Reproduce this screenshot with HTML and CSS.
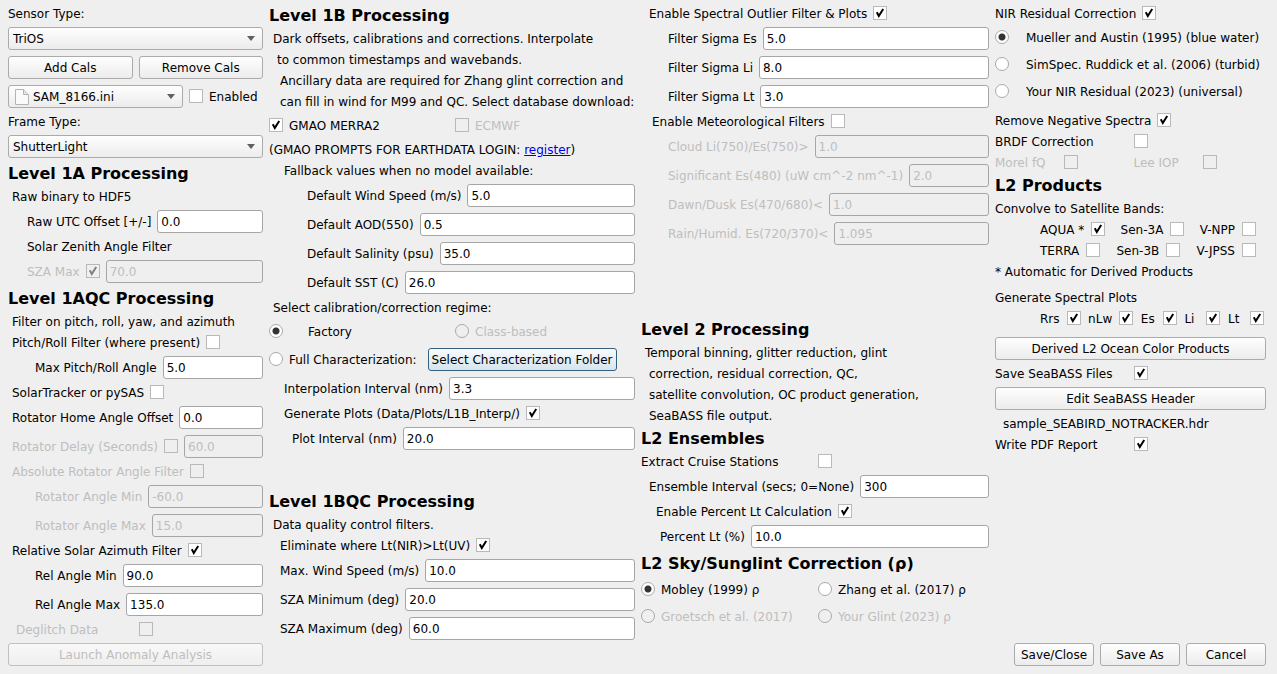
FILE: index.html
```html
<!DOCTYPE html>
<html lang="en">
<head>
<meta charset="utf-8">
<title>Configuration</title>
<link rel="stylesheet" href="styles.css">
</head>
<body>
<form class="window">
  <section class="column">
    <label class="text" for="sensor">Sensor Type:</label>
    <select class="combo" id="sensor"><option>TriOS</option></select>
    <div class="halves">
      <button class="button" type="button">Add Cals</button>
      <button class="button" type="button">Remove Cals</button>
    </div>
    <div class="row">
      <select class="combo combo-file grow" aria-label="Calibration file"><option>SAM_8166.ini</option></select>
      <span class="option enabled-option"><input class="check" type="checkbox" id="enabled"><label for="enabled">Enabled</label></span>
    </div>
    <label class="text" for="frame">Frame Type:</label>
    <select class="combo" id="frame"><option>ShutterLight</option></select>

    <h2 class="heading">Level 1A Processing</h2>
    <p class="text indent-1">Raw binary to HDF5</p>
    <div class="row indent-5"><label for="utc">Raw UTC Offset [+/-]</label><input class="field" id="utc" value="0.0"></div>
    <p class="text indent-5">Solar Zenith Angle Filter</p>
    <div class="row indent-5 off"><label for="szaon">SZA Max</label><input class="check" type="checkbox" id="szaon" checked disabled><input class="field" aria-label="SZA Max" value="70.0" disabled></div>

    <h2 class="heading">Level 1AQC Processing</h2>
    <p class="text indent-1">Filter on pitch, roll, yaw, and azimuth</p>
    <div class="row indent-1"><label for="pitch">Pitch/Roll Filter (where present)</label><input class="check" type="checkbox" id="pitch"></div>
    <div class="row indent-7"><label for="maxpitch">Max Pitch/Roll Angle</label><input class="field" id="maxpitch" value="5.0"></div>
    <div class="row indent-1"><label for="tracker">SolarTracker or pySAS</label><input class="check" type="checkbox" id="tracker"></div>
    <div class="row indent-1"><label for="home">Rotator Home Angle Offset</label><input class="field" id="home" value="0.0"></div>
    <div class="row indent-1 off"><label for="delay">Rotator Delay (Seconds)</label><input class="check" type="checkbox" id="delay" disabled><input class="field" aria-label="Rotator Delay" value="60.0" disabled></div>
    <div class="row indent-1 off"><label for="absrot">Absolute Rotator Angle Filter</label><input class="check" type="checkbox" id="absrot" disabled></div>
    <div class="row indent-7 off"><label for="rotmin">Rotator Angle Min</label><input class="field" id="rotmin" value="-60.0" disabled></div>
    <div class="row indent-7 off"><label for="rotmax">Rotator Angle Max</label><input class="field" id="rotmax" value="15.0" disabled></div>
    <div class="row indent-1"><label for="relsolar">Relative Solar Azimuth Filter</label><input class="check" type="checkbox" id="relsolar" checked></div>
    <div class="row indent-7"><label for="relmin">Rel Angle Min</label><input class="field" id="relmin" value="90.0"></div>
    <div class="row indent-7"><label for="relmax">Rel Angle Max</label><input class="field" id="relmax" value="135.0"></div>
    <div class="halves off"><label class="indent-2" for="deglitch">Deglitch Data</label><input class="check" type="checkbox" id="deglitch" disabled></div>
    <button class="button" type="button" disabled>Launch Anomaly Analysis</button>
  </section>

  <section class="column">
    <h2 class="heading">Level 1B Processing</h2>
    <p class="text indent-1">Dark offsets, calibrations and corrections. Interpolate</p>
    <p class="text indent-2">to common timestamps and wavebands.</p>
    <p class="text indent-3">Ancillary data are required for Zhang glint correction and</p>
    <p class="text indent-3">can fill in wind for M99 and QC. Select database download:</p>
    <div class="halves choice">
      <span class="option"><input class="check" type="checkbox" id="gmao" checked><label for="gmao">GMAO MERRA2</label></span>
      <span class="option off"><input class="check" type="checkbox" id="ecmwf" disabled><label for="ecmwf">ECMWF</label></span>
    </div>
    <p class="text">(GMAO PROMPTS FOR EARTHDATA LOGIN: <a class="link" href="#register">register</a>)</p>
    <p class="text indent-4">Fallback values when no model available:</p>
    <div class="row indent-10"><label for="wind">Default Wind Speed (m/s)</label><input class="field" id="wind" value="5.0"></div>
    <div class="row indent-10"><label for="aod">Default AOD(550)</label><input class="field" id="aod" value="0.5"></div>
    <div class="row indent-10"><label for="salt">Default Salinity (psu)</label><input class="field" id="salt" value="35.0"></div>
    <div class="row indent-10"><label for="sst">Default SST (C)</label><input class="field" id="sst" value="26.0"></div>
    <p class="text indent-1">Select calibration/correction regime:</p>
    <div class="halves choice">
      <span class="option"><input class="radio" type="radio" name="regime" id="factory" checked><label class="indent-5" for="factory">Factory</label></span>
      <span class="option off"><input class="radio" type="radio" name="regime" id="class" disabled><label for="class">Class-based</label></span>
    </div>
    <div class="row row-wide">
      <span class="option"><input class="radio" type="radio" name="regime" id="full"><label for="full">Full Characterization:</label></span>
      <button class="button button-focus" type="button">Select Characterization Folder</button>
    </div>
    <div class="row indent-4"><label for="interp">Interpolation Interval (nm)</label><input class="field" id="interp" value="3.3"></div>
    <div class="row indent-4"><label for="plots">Generate Plots (Data/Plots/L1B_Interp/)</label><input class="check" type="checkbox" id="plots" checked></div>
    <div class="row indent-6"><label for="plotint">Plot Interval (nm)</label><input class="field" id="plotint" value="20.0"></div>

    <h2 class="heading heading-qc">Level 1BQC Processing</h2>
    <p class="text indent-1">Data quality control filters.</p>
    <div class="row indent-3"><label for="elim">Eliminate where Lt(NIR)&gt;Lt(UV)</label><input class="check" type="checkbox" id="elim" checked></div>
    <div class="row indent-3"><label for="maxwind">Max. Wind Speed (m/s)</label><input class="field" id="maxwind" value="10.0"></div>
    <div class="row indent-3"><label for="szamin">SZA Minimum (deg)</label><input class="field" id="szamin" value="20.0"></div>
    <div class="row indent-3"><label for="szamax">SZA Maximum (deg)</label><input class="field" id="szamax" value="60.0"></div>
  </section>

  <section class="column">
    <div class="row indent-2"><label for="outlier">Enable Spectral Outlier Filter &amp; Plots</label><input class="check" type="checkbox" id="outlier" checked></div>
    <div class="row indent-7"><label for="es">Filter Sigma Es</label><input class="field" id="es" value="5.0"></div>
    <div class="row indent-7"><label for="li">Filter Sigma Li</label><input class="field" id="li" value="8.0"></div>
    <div class="row indent-7"><label for="lt">Filter Sigma Lt</label><input class="field" id="lt" value="3.0"></div>
    <div class="row indent-3"><label for="met">Enable Meteorological Filters</label><input class="check" type="checkbox" id="met"></div>
    <div class="row indent-7 off"><label for="cloud">Cloud Li(750)/Es(750)&gt;</label><input class="field" id="cloud" value="1.0" disabled></div>
    <div class="row indent-7 off"><label for="signif">Significant Es(480) (uW cm^-2 nm^-1)</label><input class="field" id="signif" value="2.0" disabled></div>
    <div class="row indent-7 off"><label for="dawn">Dawn/Dusk Es(470/680)&lt;</label><input class="field" id="dawn" value="1.0" disabled></div>
    <div class="row indent-7 off"><label for="rain">Rain/Humid. Es(720/370)&lt;</label><input class="field" id="rain" value="1.095" disabled></div>

    <h2 class="heading heading-l2">Level 2 Processing</h2>
    <p class="text indent-1">Temporal binning, glitter reduction, glint</p>
    <p class="text indent-2">correction, residual correction, QC,</p>
    <p class="text indent-2">satellite convolution, OC product generation,</p>
    <p class="text indent-2">SeaBASS file output.</p>
    <h2 class="heading">L2 Ensembles</h2>
    <div class="halves"><label for="cruise">Extract Cruise Stations</label><input class="check" type="checkbox" id="cruise"></div>
    <div class="row indent-2"><label for="ens">Ensemble Interval (secs; 0=None)</label><input class="field" id="ens" value="300"></div>
    <div class="row indent-4"><label for="pct">Enable Percent Lt Calculation</label><input class="check" type="checkbox" id="pct" checked></div>
    <div class="row indent-5"><label for="pctlt">Percent Lt (%)</label><input class="field" id="pctlt" value="10.0"></div>
    <h2 class="heading">L2 Sky/Sunglint Correction (ρ)</h2>
    <div class="halves choice">
      <span class="option"><input class="radio" type="radio" name="glint" id="mobley" checked><label for="mobley">Mobley (1999) ρ</label></span>
      <span class="option"><input class="radio" type="radio" name="glint" id="zhang"><label for="zhang">Zhang et al. (2017) ρ</label></span>
    </div>
    <div class="halves choice off">
      <span class="option"><input class="radio" type="radio" name="glint" id="groetsch" disabled><label for="groetsch">Groetsch et al. (2017)</label></span>
      <span class="option"><input class="radio" type="radio" name="glint" id="yourglint" disabled><label for="yourglint">Your Glint (2023) ρ</label></span>
    </div>
  </section>

  <section class="column">
    <div class="row"><label for="nir">NIR Residual Correction</label><input class="check" type="checkbox" id="nir" checked></div>
    <span class="option choice"><input class="radio" type="radio" name="nirtype" id="mueller" checked><label class="indent-3" for="mueller">Mueller and Austin (1995) (blue water)</label></span>
    <span class="option choice"><input class="radio" type="radio" name="nirtype" id="simspec"><label class="indent-3" for="simspec">SimSpec. Ruddick et al. (2006) (turbid)</label></span>
    <span class="option choice"><input class="radio" type="radio" name="nirtype" id="yournir"><label class="indent-3" for="yournir">Your NIR Residual (2023) (universal)</label></span>
    <div class="row apart"><label for="neg">Remove Negative Spectra</label><input class="check" type="checkbox" id="neg" checked></div>
    <div class="halves"><label for="brdf">BRDF Correction</label><input class="check" type="checkbox" id="brdf"></div>
    <div class="quarters off">
      <label for="morel">Morel fQ</label><input class="check" type="checkbox" id="morel" disabled>
      <label for="lee">Lee IOP</label><input class="check" type="checkbox" id="lee" disabled>
    </div>
    <h2 class="heading">L2 Products</h2>
    <p class="text">Convolve to Satellite Bands:</p>
    <div class="spread bands">
      <span class="pair"><label for="aqua">AQUA *</label><input class="check" type="checkbox" id="aqua" checked></span>
      <span class="pair"><label for="s3a">Sen-3A</label><input class="check" type="checkbox" id="s3a"></span>
      <span class="pair"><label for="npp">V-NPP</label><input class="check" type="checkbox" id="npp"></span>
    </div>
    <div class="spread bands">
      <span class="pair"><label for="terra">TERRA</label><input class="check" type="checkbox" id="terra"></span>
      <span class="pair"><label for="s3b">Sen-3B</label><input class="check" type="checkbox" id="s3b"></span>
      <span class="pair"><label for="jpss">V-JPSS</label><input class="check" type="checkbox" id="jpss"></span>
    </div>
    <p class="text">* Automatic for Derived Products</p>
    <p class="text apart">Generate Spectral Plots</p>
    <div class="spread">
      <span class="pair"><label for="prrs">Rrs</label><input class="check" type="checkbox" id="prrs" checked></span>
      <span class="pair"><label for="pnlw">nLw</label><input class="check" type="checkbox" id="pnlw" checked></span>
      <span class="pair"><label for="pes">Es</label><input class="check" type="checkbox" id="pes" checked></span>
      <span class="pair"><label for="pli">Li</label><input class="check" type="checkbox" id="pli" checked></span>
      <span class="pair"><label for="plt">Lt</label><input class="check" type="checkbox" id="plt" checked></span>
    </div>
    <button class="button apart" type="button">Derived L2 Ocean Color Products</button>
    <div class="halves"><label for="seabass">Save SeaBASS Files</label><input class="check" type="checkbox" id="seabass" checked></div>
    <button class="button" type="button">Edit SeaBASS Header</button>
    <p class="text indent-2">sample_SEABIRD_NOTRACKER.hdr</p>
    <div class="halves"><label for="pdf">Write PDF Report</label><input class="check" type="checkbox" id="pdf" checked></div>
    <div class="row actions">
      <button class="button" type="button">Save/Close</button>
      <button class="button" type="button">Save As</button>
      <button class="button" type="button">Cancel</button>
    </div>
  </section>
</form>
</body>
</html>
```
FILE: styles.css
```css
* {
  box-sizing: border-box;
}

body {
  margin: 0;
  background: #efefef;
  color: #000;
  font: 12px/14px "DejaVu Sans", sans-serif;
}

.window {
  display: grid;
  grid-template-columns: minmax(0, 255fr) minmax(0, 366fr) minmax(0, 348fr) minmax(0, 271fr);
  gap: 6px;
  padding: 6px 11px 8px 8px;
}

.column {
  display: flex;
  flex-direction: column;
  gap: 6px;
}

label,
.text {
  padding-top: 1px;
}

.text {
  margin: 0;
  white-space: nowrap;
}

.heading {
  margin: 0;
  font-size: 16px;
  line-height: 19px;
  font-weight: bold;
  white-space: nowrap;
}

.heading-qc {
  margin-top: 36px;
}

.heading-l2 {
  margin-top: 69px;
}

.apart {
  margin-top: 5px;
}

.indent-1 { padding-left: 4px; }
.indent-2 { padding-left: 8px; }
.indent-3 { padding-left: 11px; }
.indent-4 { padding-left: 15px; }
.indent-5 { padding-left: 19px; }
.indent-6 { padding-left: 23px; }
.indent-7 { padding-left: 27px; }
.indent-10 { padding-left: 38px; }

.row,
.option,
.pair,
.spread {
  display: flex;
  align-items: center;
  gap: 6px;
  white-space: nowrap;
}

.row-wide {
  gap: 11px;
}

.enabled-option {
  flex: 0 0 74px;
}

.pair {
  gap: 7px;
}

.pair label {
  min-width: 15px;
}

.spread {
  justify-content: space-between;
  padding: 0 2px 0 45px;
}

.bands {
  padding-right: 10px;
}

.halves,
.quarters {
  display: grid;
  grid-template-columns: repeat(2, minmax(0, 1fr));
  align-items: center;
  gap: 6px;
  white-space: nowrap;
}

.quarters {
  grid-template-columns: repeat(4, minmax(0, 1fr));
}

.choice {
  min-height: 21px;
}

.off {
  color: #bebebe;
}

.grow {
  flex: 1;
}

.link {
  color: #0000e6;
}

.field {
  flex: 1;
  min-width: 0;
  width: 0;
  height: 23px;
  padding: 1px 3px 0;
  border: 1px solid #a6a6a6;
  border-radius: 3px;
  background: #fff;
  color: #000;
  font: inherit;
}

.field:disabled {
  background: #efefef;
  color: #bebebe;
}

.button,
.combo {
  height: 23px;
  padding: 1px 4px 0;
  border: 1px solid #ababab;
  border-radius: 3px;
  background: linear-gradient(#fefefe, #ececec);
  color: #000;
  font: inherit;
}

.button:disabled {
  border-color: #c0c0c0;
  background: linear-gradient(#f8f8f8, #efefef);
  color: #bebebe;
}

.button-focus {
  padding: 1px 3px 0;
  border-color: #37607f;
  background: linear-gradient(#f8fbfd, #d5e4ee);
}

.combo {
  appearance: none;
  background:
    url("data:image/svg+xml,%3Csvg xmlns='http://www.w3.org/2000/svg' width='8' height='5'%3E%3Cpath d='M0 0h8L4 5z' fill='%23606060'/%3E%3C/svg%3E") no-repeat right 7px center,
    linear-gradient(#fefefe, #ececec);
}

.combo-file {
  padding-left: 24px;
  background:
    url("data:image/svg+xml,%3Csvg xmlns='http://www.w3.org/2000/svg' width='14' height='16'%3E%3Cpath d='M.5.5h8l5 5v10H.5z' fill='%23fafafa' stroke='%23b4b4b4'/%3E%3Cpath d='M8.500.5v5h5' fill='%23e4e4e4' stroke='%23b4b4b4'/%3E%3C/svg%3E") no-repeat 6px center,
    url("data:image/svg+xml,%3Csvg xmlns='http://www.w3.org/2000/svg' width='8' height='5'%3E%3Cpath d='M0 0h8L4 5z' fill='%23606060'/%3E%3C/svg%3E") no-repeat right 7px center,
    linear-gradient(#fefefe, #ececec);
}

.check,
.radio {
  appearance: none;
  flex: none;
  width: 14px;
  height: 14px;
  margin: 0 0 1px;
  border: 1px solid #b9b9b9;
  background: #fff center no-repeat;
}

.radio {
  border-color: #a9a9a9;
  border-radius: 50%;
}

.check:checked {
  background-image: url("data:image/svg+xml,%3Csvg xmlns='http://www.w3.org/2000/svg' width='12' height='12'%3E%3Cpath d='M2.800 5.200L4.800 9L9.200 2' fill='none' stroke='%23000' stroke-width='2'/%3E%3C/svg%3E");
}

.check:disabled,
.radio:disabled {
  background-color: #efefef;
}

.check:disabled:checked {
  background-image: url("data:image/svg+xml,%3Csvg xmlns='http://www.w3.org/2000/svg' width='12' height='12'%3E%3Cpath d='M2.800 5.200L4.800 9L9.200 2' fill='none' stroke='%23808080' stroke-width='2'/%3E%3C/svg%3E");
}

.radio:checked {
  background-image: radial-gradient(circle, #333 0 3px, transparent 4px);
}

.actions {
  justify-content: flex-end;
  margin-top: auto;
}

.actions .button {
  width: 80px;
}
```
